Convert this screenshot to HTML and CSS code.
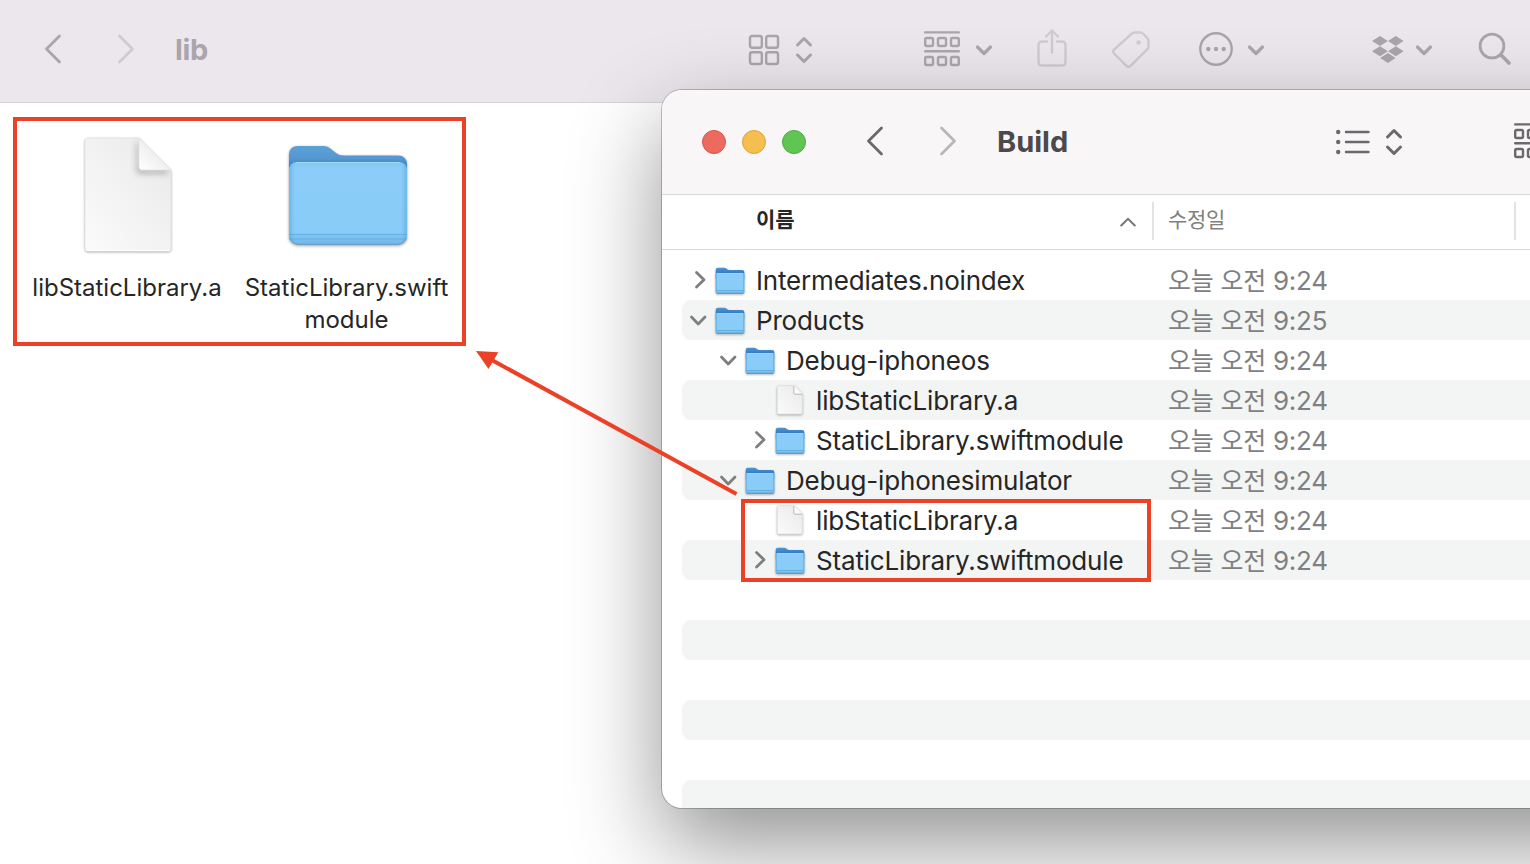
FILE: index.html
```html
<!DOCTYPE html>
<html lang="ko">
<head>
<meta charset="utf-8">
<title>Finder</title>
<link rel="stylesheet" href="styles.css">
</head>
<body>
<svg class="defs" width="0" height="0" aria-hidden="true">
  <defs>
    <linearGradient id="tab" x1="0" y1="0" x2="0" y2="1"><stop offset="0" stop-color="#5da2d6"/><stop offset=".25" stop-color="#5497d2"/><stop offset=".5" stop-color="#3078c4"/></linearGradient>
    <linearGradient id="tabsmall" x1="0" y1="0" x2="0" y2="1"><stop offset="0" stop-color="#4f97d2"/><stop offset=".5" stop-color="#2f7ac6"/></linearGradient>
    <linearGradient id="front" x1="0" y1="0" x2="0" y2="1"><stop offset="0" stop-color="#82c8f4"/><stop offset=".08" stop-color="#8bcdf8"/><stop offset=".84" stop-color="#89ccf8"/><stop offset="1" stop-color="#70b9e8"/></linearGradient>
    <linearGradient id="side" x1="0" y1="0" x2="1" y2="0"><stop offset="0" stop-color="#5aa9dd" stop-opacity=".6"/><stop offset=".05" stop-color="#5aa9dd" stop-opacity="0"/><stop offset=".95" stop-color="#5aa9dd" stop-opacity="0"/><stop offset="1" stop-color="#5aa9dd" stop-opacity=".6"/></linearGradient>
    <linearGradient id="paper" x1="1" y1="0" x2="0" y2="1"><stop offset="0" stop-color="#e9e9e9"/><stop offset=".5" stop-color="#f2f2f2"/><stop offset="1" stop-color="#fbfbfb"/></linearGradient>
    <linearGradient id="curl" x1="0" y1="1" x2=".6" y2=".4"><stop offset="0" stop-color="#fff"/><stop offset="1" stop-color="#ececec"/></linearGradient>
    <filter id="soft" x="-50%" y="-50%" width="200%" height="200%"><feGaussianBlur stdDeviation="3"/></filter>
    <clipPath id="pageclip"><path d="M4 1H55L87 33V111a3 3 0 0 1-3 3H4a3 3 0 0 1-3-3V4a3 3 0 0 1 3-3Z"/></clipPath>
  </defs>
  <symbol id="folder" viewBox="0 0 120 101">
    <path d="M1 16V10Q1 1 10 1H36Q40 1 43 4L48 8Q51 10.500 56 10.500H110Q119 10.500 119 20V50H1Z" fill="url(#tab)"/>
    <rect x="1" y="17" width="118" height="82" rx="8" fill="url(#front)"/>
    <rect x="1" y="17" width="118" height="82" rx="8" fill="url(#side)"/>
    <path d="M8 17.500H112" stroke="#a6daf9" fill="none"/>
    <path d="M1 89.500H119M1 94H118" stroke="#60aade" fill="none" stroke-width="1" opacity=".8"/>
    <path d="M2 93Q4 99 10 99.300H110Q116 99 118 93" fill="none" stroke="#5c9cc8" stroke-width="1"/>
  </symbol>
  <symbol id="folder-small" viewBox="0 0 30 28">
    <path d="M.7 3Q.7 .7 3 .7H9.500Q10.500 .7 11.300 1.400L12.300 2.300Q13 2.900 14 2.900H27Q29.300 2.900 29.300 5V12H.7Z" fill="url(#tabsmall)"/>
    <rect x=".7" y="6" width="28.600" height="20.600" rx="1.600" fill="url(#front)"/>
    <path d="M1.200 7V25.500M28.800 7V25.500" stroke="#62aee2" stroke-width="1" fill="none"/>
    <path d="M2 6.500H28" stroke="#9bd6fb" stroke-width="1" fill="none"/>
    <path d="M1 23.500H29" stroke="#62aee2" stroke-width="1" fill="none"/>
    <path d="M1.500 26.200H28.500" stroke="#4c93c8" stroke-width="1" fill="none"/>
  </symbol>
  <symbol id="file-small" viewBox="0 0 30 30">
    <path d="M3.500 .8H19.500L27.300 8.600V27.500Q27.300 29 25.800 29H3.500Q2.300 29 2.300 27.500V2.200Q2.300 .8 3.500 .8Z" fill="url(#paper)" stroke="#dedede" stroke-width=".7"/>
    <path d="M18.800 1V8.200Q18.800 9.200 19.800 9.200H27" fill="none" stroke="#b9b9b9" stroke-width="1"/>
    <path d="M19.500 .9L27.200 8.600H20.300Q19.500 8.600 19.500 7.800Z" fill="#fafafa" stroke="#ddd" stroke-width=".4"/>
  </symbol>
  <symbol id="file" viewBox="0 0 88 116">
    <path d="M4 1H55L87 33V111a3 3 0 0 1-3 3H4a3 3 0 0 1-3-3V4a3 3 0 0 1 3-3Z" fill="url(#paper)" stroke="#e3e3e3" stroke-width=".8"/>
    <g clip-path="url(#pageclip)"><path d="M55 6V30Q55 33 58 33H84V36H57Q53 36 53 33V6Z" fill="#555" opacity=".65" filter="url(#soft)"/></g>
    <path d="M55 1L87 33H58Q55 33 55 30Z" fill="url(#curl)" stroke="#ddd" stroke-width=".6"/>
    <path d="M2 113.500H86" stroke="#fff" stroke-width="1.200"/>
  </symbol>
  <symbol id="left" viewBox="0 0 20 32"><path d="M16.500 3L3.500 16L16.500 29"/></symbol>
  <symbol id="right" viewBox="0 0 20 32"><path d="M3.500 3L16.500 16L3.500 29"/></symbol>
  <symbol id="updown" viewBox="0 0 20 30"><path d="M3.500 10L10 3.500L16.500 10M3.500 20L10 26.500L16.500 20"/></symbol>
  <symbol id="down" viewBox="0 0 20 14"><path d="M3.500 4L10 10.500L16.500 4"/></symbol>
  <symbol id="groups" viewBox="0 0 36 36"><path d="M1.200 1.400H34.800M1.200 20.300H34.800"/><rect x="1.200" y="7" width="7.800" height="8" rx="1.500"/><rect x="14" y="7" width="8" height="8" rx="1.500"/><rect x="27" y="7" width="7.800" height="8" rx="1.500"/><rect x="1.200" y="26" width="7.800" height="8" rx="1.500"/><rect x="14" y="26" width="8" height="8" rx="1.500"/><rect x="27" y="26" width="7.800" height="8" rx="1.500"/></symbol>
  <symbol id="tr" viewBox="0 0 32 40"><path d="M14.500 12.500L22 19.700L14.500 27"/></symbol>
  <symbol id="td" viewBox="0 0 32 40"><path d="M9.500 17L16.200 24L23 17"/></symbol>
</svg>

<main class="screen">
  <section class="back">
    <header class="bar bar-back">
      <svg class="ico chev"><use href="#left"/></svg>
      <svg class="ico chev faint gap-nav"><use href="#right"/></svg>
      <h1 class="title title-lib">lib</h1>
      <svg class="ico grid" viewBox="0 0 32 32"><rect x="2" y="2" width="11.800" height="11.800" rx="2"/><rect x="18.200" y="2" width="11.800" height="11.800" rx="2"/><rect x="2" y="18.200" width="11.800" height="11.800" rx="2"/><rect x="18.200" y="18.200" width="11.800" height="11.800" rx="2"/></svg>
      <svg class="ico updown"><use href="#updown"/></svg>
      <svg class="ico groups"><use href="#groups"/></svg>
      <svg class="ico down"><use href="#down"/></svg>
      <svg class="ico faint share" viewBox="0 0 32 40"><path d="M11 13.500H6Q2.500 13.500 2.500 17V34Q2.500 37.500 6 37.500H26Q29.500 37.500 29.500 34V17Q29.500 13.500 26 13.500H21M16 24.500V3M10 8.500L16 2.500L22 8.500"/></svg>
      <svg class="ico faint tag" viewBox="0 0 40 40"><path d="M21 3.500Q22.300 2.500 24 2.500H29Q31 2.500 32.300 3.800L36.200 8Q37.500 9.500 37.500 11V16Q37.500 18 36.200 19.400L19.800 35.700Q17.500 38 15.200 35.700L3 23.500Q1.200 21.500 3.200 19.500Z"/><circle class="solid" cx="27.600" cy="12.400" r="2.200"/></svg>
      <svg class="ico more" viewBox="0 0 36 36"><circle cx="18" cy="18" r="15.700"/><circle class="solid" cx="10.300" cy="18" r="2.200"/><circle class="solid" cx="18" cy="18" r="2.200"/><circle class="solid" cx="25.700" cy="18" r="2.200"/></svg>
      <svg class="ico down more-down"><use href="#down"/></svg>
      <svg class="ico box" viewBox="0 0 32 28"><path class="solid" d="M8 0L15.800 5L8 10L0 5ZM23.800 0L31.600 5L23.800 10L16 5ZM8 10.200L15.800 15.200L8 20.200L0 15.200ZM23.800 10.200L31.600 15.200L23.800 20.200L16 15.200ZM15.900 17L23.600 22L15.900 27L8.200 22Z"/></svg>
      <svg class="ico down"><use href="#down"/></svg>
      <svg class="ico search" viewBox="0 0 36 36"><circle cx="15" cy="15" r="11.900"/><path class="handle" d="M23.800 23.800L32 32"/></svg>
    </header>
    <div class="desk">
      <div class="picked">
        <figure class="item item-file"><svg class="art-file"><use href="#file"/></svg><figcaption class="cap">libStaticLibrary.a</figcaption></figure>
        <figure class="item item-folder"><svg class="art-folder"><use href="#folder"/></svg><figcaption class="cap">StaticLibrary.swift<br>module</figcaption></figure>
      </div>
    </div>
  </section>

  <section class="window">
    <header class="bar bar-front">
      <span class="light red"></span><span class="light yellow"></span><span class="light green"></span>
      <svg class="ico chev front-chev"><use href="#left"/></svg>
      <svg class="ico chev gap-nav faint2"><use href="#right"/></svg>
      <h2 class="title title-build">Build</h2>
      <svg class="ico list" viewBox="0 0 36 28"><path d="M11 4H33.500M11 14H33.500M11 24H33.500"/><circle class="solid" cx="3.200" cy="4" r="2.200"/><circle class="solid" cx="3.200" cy="14" r="2.200"/><circle class="solid" cx="3.200" cy="24" r="2.200"/></svg>
      <svg class="ico updown"><use href="#updown"/></svg>
      <svg class="ico groups front-groups"><use href="#groups"/></svg>
    </header>
    <div class="heads">
      <div class="head head-name"><span>이름</span><svg class="sort" viewBox="0 0 18 12"><path d="M2.200 9.500L9 2.800L15.800 9.500"/></svg></div>
      <div class="head head-date"><span>수정일</span></div>
    </div>
    <div class="rows">
      <div class="row"><div class="name"><svg class="tw"><use href="#tr"/></svg><svg class="fi"><use href="#folder-small"/></svg><span>Intermediates.noindex</span></div><time>오늘 오전 <b>9:24</b></time></div>
      <div class="row"><div class="name"><svg class="tw"><use href="#td"/></svg><svg class="fi"><use href="#folder-small"/></svg><span>Products</span></div><time>오늘 오전 <b>9:25</b></time></div>
      <div class="row"><div class="name in1"><svg class="tw"><use href="#td"/></svg><svg class="fi"><use href="#folder-small"/></svg><span>Debug-iphoneos</span></div><time>오늘 오전 <b>9:24</b></time></div>
      <div class="row"><div class="name in2"><i class="tw"></i><svg class="fi page"><use href="#file-small"/></svg><span>libStaticLibrary.a</span></div><time>오늘 오전 <b>9:24</b></time></div>
      <div class="row"><div class="name in2"><svg class="tw"><use href="#tr"/></svg><svg class="fi"><use href="#folder-small"/></svg><span>StaticLibrary.swiftmodule</span></div><time>오늘 오전 <b>9:24</b></time></div>
      <div class="row"><div class="name in1"><svg class="tw"><use href="#td"/></svg><svg class="fi"><use href="#folder-small"/></svg><span>Debug-iphonesimulator</span></div><time>오늘 오전 <b>9:24</b></time></div>
      <div class="row"><div class="name in2"><i class="tw"></i><svg class="fi page"><use href="#file-small"/></svg><span>libStaticLibrary.a</span></div><time>오늘 오전 <b>9:24</b></time></div>
      <div class="row"><div class="name in2"><svg class="tw"><use href="#tr"/></svg><svg class="fi"><use href="#folder-small"/></svg><span>StaticLibrary.swiftmodule</span></div><time>오늘 오전 <b>9:24</b></time></div>
      <div class="row"></div><div class="row"></div><div class="row"></div><div class="row"></div><div class="row"></div><div class="row"></div>
    </div>
  </section>

  <div class="mark"></div>
  <svg class="arrow" viewBox="0 0 1530 864"><path d="M736.500 494L490 359" stroke="#eb4126" stroke-width="4"/><path d="M476 351L498.300 352.300L488.500 369Z" fill="#eb4126"/></svg>
</main>
</body>
</html>
```
FILE: styles.css
```css
* { box-sizing: border-box; }
body { margin: 0; background: #fff; font-family: Inter, "Noto Sans CJK KR", sans-serif; color: #262626; }
.defs { position: absolute; }
.screen { position: relative; width: 1530px; height: 864px; overflow: hidden; }
.bar { display: flex; align-items: center; }
.bar svg { display: block; flex: none; }
.back { height: 864px; display: flex; flex-direction: column; }
.bar-back { height: 103px; padding: 0 0 4px 43px; background: #ece7ed; border-bottom: 1px solid #d6d3d7; color: #aaa5ab; }
.ico { fill: none; stroke: currentColor; stroke-width: 2.400; stroke-linecap: round; stroke-linejoin: round; }
.solid { fill: currentColor; stroke: none; }
.faint { color: #d0cbd1; }
.faint2 { color: #b9b7b9; }
.chev { width: 20px; height: 32px; stroke-width: 2.800; }
.gap-nav { margin-left: 53px; }
.title { margin: 0; font-size: 29px; line-height: 36px; font-weight: 700; white-space: nowrap; flex: none; }
.title-lib { width: 573px; margin-left: 39px; padding-top: 1px; letter-spacing: -.3px; }
.grid { width: 32px; height: 32px; margin-top: 1px; }
.updown { width: 20px; height: 30px; margin: 1px 0 0 14px; stroke-width: 3; }
.groups { width: 36px; height: 36px; margin-left: 110px; }
.down { width: 20px; height: 14px; margin: 1px 0 0 14px; stroke-width: 3.200; }
.share { width: 32px; height: 40px; margin: -3px 0 0 42px; }
.tag { width: 40px; height: 40px; margin: 1px 0 0 43px; }
.more { width: 36px; height: 36px; margin-left: 47px; }
.more-down { margin-left: 12px; }
.box { width: 32px; height: 28px; margin: 1px 0 0 106px; }
.box + .down { margin-left: 10px; }
.search { width: 36px; height: 36px; margin-left: 43px; }
.search circle { stroke-width: 2.800; }
.handle { stroke-width: 3.600; }

.desk { flex: 1; padding: 14px 0 0 13px; }
.picked { display: flex; width: 453px; height: 229px; border: 4px solid #eb4126; }
.item { margin: 0; display: flex; flex-direction: column; align-items: center; width: 220px; }
.item-folder { width: 219px; }
.art-file { width: 88px; height: 116px; margin: 16px 0 0 2px; filter: drop-shadow(0 1px 1px rgba(0,0,0,.3)); }
.art-folder { width: 120px; height: 101px; margin: 24px 0 7px 2px; filter: drop-shadow(0 1px 1.500px rgba(0,0,0,.4)); }
.cap { margin-top: 19px; font-size: 24px; line-height: 32px; text-align: center; white-space: nowrap; }

.window { position: absolute; left: 662px; top: 90px; width: 1000px; height: 718px; background: #fff; border-radius: 20px; overflow: hidden; box-shadow: 0 0 0 1px rgba(0,0,0,.22), 0 36px 90px rgba(0,0,0,.43); }
.bar-front { height: 105px; padding: 0 0 1px 40px; background: #f9f6f8; border-bottom: 1px solid #d9d7d9; color: #6b696b; }
.light { width: 24px; height: 24px; margin-right: 16px; border-radius: 50%; flex: none; }
.red { background: #ec6a5e; border: 1px solid #d65549; }
.yellow { background: #f4bf4f; border: 1px solid #d9a33c; }
.green { background: #61c554; border: 1px solid #50aa44; }
.front-chev { margin-left: 43px; }
.bar-front .chev { margin-top: -2px; }
.title-build { width: 338px; margin-left: 39px; color: #4b494b; }
.list { width: 36px; height: 28px; }
.bar-front .updown { margin: 0 0 0 13px; }
.front-groups { margin: -2px 0 0 110px; }

.heads { display: flex; height: 55px; padding-top: 7px; border-bottom: 1px solid #d9d9d9; font-size: 21px; }
.head { height: 38px; display: flex; align-items: center; border-right: 2px solid #e3e3e3; }
.head span { line-height: 36px; padding-bottom: 2px; }
.head-name { width: 492px; padding: 0 15px 0 94px; justify-content: space-between; font-weight: 700; }
.head-date { width: 362px; padding-left: 14px; color: #808080; letter-spacing: -.3px; }
.sort { width: 18px; height: 12px; margin-top: 1px; fill: none; stroke: #757575; stroke-width: 2; stroke-linecap: round; }
.rows { padding: 10px 0 0 20px; }
.row { height: 40px; display: flex; align-items: center; border-radius: 9px; font-size: 26px; line-height: 40px; letter-spacing: -.17px; }
.row:nth-child(even) { background: #f3f5f4; }
.name { width: 486px; display: flex; align-items: center; white-space: nowrap; }
.name span { padding-top: 2px; }
.in1 { padding-left: 30px; }
.in2 { padding-left: 60px; }
.tw { width: 32px; height: 40px; margin-right: 1px; flex: none; fill: none; stroke: #7f7f7f; stroke-width: 2.800; stroke-linecap: round; stroke-linejoin: round; }
.fi { width: 30px; height: 28px; margin: 1px 11px 0 0; flex: none; filter: drop-shadow(0 1px 1px rgba(0,0,0,.3)); }
.page { height: 30px; margin-top: 0; }
.row time { padding-top: 2px; color: #808080; font-size: 25px; white-space: nowrap; letter-spacing: -.2px; }
.row b { font-weight: 400; font-size: 26px; }

.mark { position: absolute; left: 741px; top: 499px; width: 410px; height: 83px; border: 4px solid #eb4126; }
.arrow { position: absolute; left: 0; top: 0; width: 1530px; height: 864px; pointer-events: none; }
```
